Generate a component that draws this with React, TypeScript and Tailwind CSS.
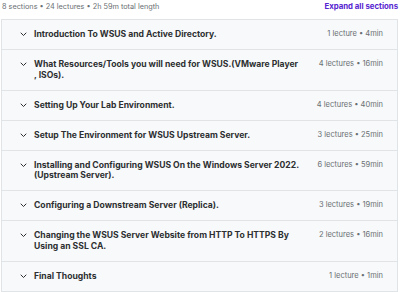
const sections = [
  { title: "Introduction To WSUS and Active Directory.", meta: "1 lecture • 4min" },
  { title: "What Resources/Tools you will need for WSUS.(VMware Player , ISOs).", meta: "4 lectures • 16min" },
  { title: "Setting Up Your Lab Environment.", meta: "4 lectures • 40min" },
  { title: "Setup The Environment for WSUS Upstream Server.", meta: "3 lectures • 25min" },
  { title: "Installing and Configuring WSUS On the Windows Server 2022. (Upstream Server).", meta: "6 lectures • 59min" },
  { title: "Configuring a Downstream Server (Replica).", meta: "3 lectures • 19min" },
  { title: "Changing the WSUS Server Website from HTTP To HTTPS By Using an SSL CA.", meta: "2 lectures • 16min" },
  { title: "Final Thoughts", meta: "1 lecture • 1min" },
];

const Chevron = () => (
  <svg width="7" height="5" viewBox="0 0 7 5" className="mt-[3px] shrink-0">
    <path d="M1 1 L3.5 3.5 L6 1" fill="none" stroke="#2d2f31" strokeWidth="1" strokeLinecap="round" />
  </svg>
);

export default function App() {
  return (
    <div
      className="w-[400px] h-[292px] bg-white overflow-hidden px-[1px]"
      style={{ fontFamily: "Inter, 'Noto Sans', sans-serif" }}
    >
      <div className="flex items-center justify-between h-[19px] pb-[5px]">
        <span className="text-[7.3px] text-[#6a6f73] leading-none pl-[1px]">
          8 sections • 24 lectures • 2h 59m total length
        </span>
        <span className="text-[7.8px] font-bold text-[#5624d0] leading-none pr-[1px]">
          Expand all sections
        </span>
      </div>
      <div className="border-t border-x border-[#e0e4e7] w-[397px]">
        {sections.map((s) => (
          <div
            key={s.title}
            className="flex items-start bg-[#f7f9fa] border-b border-[#e0e4e7] pl-[18px] pr-[14px] py-[9.25px]"
          >
            <Chevron />
            <div className="ml-[7px] w-[265px] text-[8.6px] font-bold text-[#2d2f31] leading-[10.5px]">
              {s.title}
            </div>
            <div className="ml-auto text-[7.5px] text-[#6a6f73] leading-[10.5px] whitespace-nowrap">
              {s.meta}
            </div>
          </div>
        ))}
      </div>
    </div>
  );
}
